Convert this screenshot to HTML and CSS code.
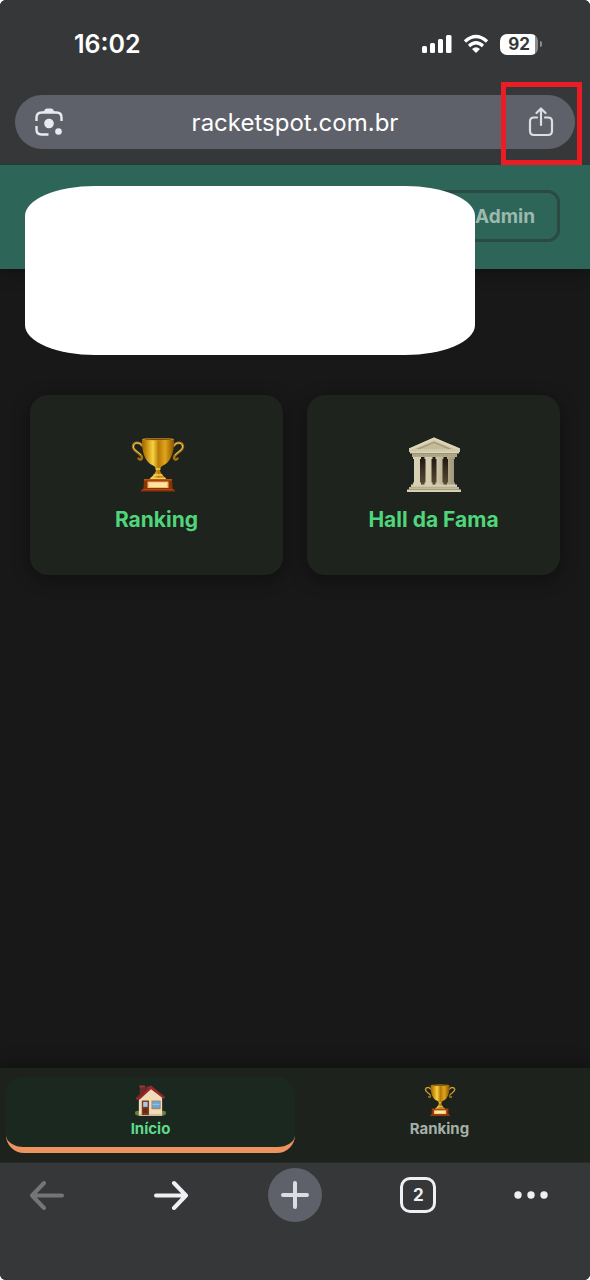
FILE: index.html
```html
<!DOCTYPE html>
<html lang="pt-BR">
<head>
    <meta charset="UTF-8">
    <meta name="viewport" content="width=device-width, initial-scale=1.0">
    <title>RacketSpot</title>
    <link rel="stylesheet" href="styles.css">
</head>
<body>
    <!-- shared icons -->
    <svg class="sprite" aria-hidden="true">
        <defs>
            <linearGradient id="gold" x1="0" x2="1" y1="0" y2="0">
                <stop offset="0" stop-color="#9a6504"/>
                <stop offset=".16" stop-color="#cf930f"/>
                <stop offset=".34" stop-color="#f5d244"/>
                <stop offset=".52" stop-color="#b87a06"/>
                <stop offset=".72" stop-color="#e0a51b"/>
                <stop offset="1" stop-color="#8a5200"/>
            </linearGradient>
            <linearGradient id="stone" x1="0" x2="1" y1="0" y2="0">
                <stop offset="0" stop-color="#d9d1b4"/>
                <stop offset=".5" stop-color="#d5ccae"/>
                <stop offset="1" stop-color="#a0977a"/>
            </linearGradient>
            <linearGradient id="shade" x1="0" x2="0" y1="0" y2="1">
                <stop offset="0" stop-color="#1d170f"/>
                <stop offset="1" stop-color="#5a4a35"/>
            </linearGradient>
        </defs>
        <symbol id="trophy" viewBox="0 0 56 56">
            <g fill="none" stroke-linecap="round">
                <path d="M13.500 9C11 5 5 4.500 4 9C3.500 14 10 15 12.500 19C14 22 11 24 9.500 21.500" stroke="#a87410" stroke-width="2.400"/>
                <path d="M44.500 9C47 5 53 4.500 54 9C54.500 14 48 15 45.500 19C44 22 47 24 48.500 21.500" stroke="#a87410" stroke-width="2.400"/>
                <path d="M13 8.500C10.500 5 5.500 5 4.500 9C4 13 9 14.500 11.500 17.500" stroke="#ead17a" stroke-width="1"/>
                <path d="M45 8.500C47.500 5 52.500 5 53.500 9C54 13 49 14.500 46.500 17.500" stroke="#ead17a" stroke-width="1"/>
            </g>
            <path d="M13 2C12.500 15 16 25 24 28.500C26 29.500 27 31 27 33C26.500 37 23.500 39 20 42.500H38C34.500 39 31.500 37 31 33C31 31 32 29.500 34 28.500C42 25 45.500 15 45 2Z" fill="url(#gold)"/>
            <ellipse cx="29" cy="2.200" rx="16" ry="1.300" fill="#c9921e"/>
            <ellipse cx="29" cy="2.300" rx="13.500" ry=".7" fill="#765008"/>
            <path d="M26.500 32H31.500M24.500 38H33.500M21.500 41.500H36.500" stroke="#f4cf5c" stroke-width="1.300"/>
            <path d="M15 42H43L43.500 51.500L46 53V54.500H12V53L14.500 51.500Z" fill="#8b3206"/>
            <path d="M15 42H43V43.500H15Z" fill="#b9560f"/>
            <path d="M14 52.500H44" stroke="#b04a0c"/>
            <rect x="18.500" y="44.500" width="21" height="6.500" fill="#f2b968"/>
            <rect x="20" y="45.500" width="18" height="4.500" fill="#ffe2a6"/>
        </symbol>
        <symbol id="temple" viewBox="0 0 56 56">
            <path d="M8 17H48V48H8Z" fill="#3c3322"/>
            <path d="M13 20H20V47H13ZM25 20H32V47H25ZM36 20H43V47H36Z" fill="url(#shade)"/>
            <path d="M28 .5L54 11.500V15H3V11.500Z" fill="#cfc7a8"/>
            <path d="M28 .5L54 11.500L53 13.500L28 3L4 13.500L3 11.500Z" fill="#ddd5b8"/>
            <path d="M28 4.500L46 12H10Z" fill="#a39a7a"/>
            <path d="M28 6L42 12H14Z" fill="#c4bb9a"/>
            <path d="M4 14.500H53V16.500H4Z" fill="#dcd4b6"/>
            <path d="M6 16.500H51V20H6Z" fill="#b5ab8a"/>
            <path d="M7 18H50" stroke="#968d6f" stroke-width=".8" stroke-dasharray="1 1"/>
            <g fill="url(#stone)">
                <path d="M8 20H14V47H8ZM19.500 20H25.500V47H19.500ZM30.500 20H36.500V47H30.500ZM42 20H48V47H42Z"/>
                <path d="M7 20H15V22H7ZM18.500 20H26.500V22H18.500ZM29.500 20H37.500V22H29.500ZM41 20H49V22H41Z"/>
                <path d="M7 45.500H15V48H7ZM18.500 45.500H26.500V48H18.500ZM29.500 45.500H37.500V48H29.500ZM41 45.500H49V48H41Z"/>
            </g>
            <path d="M5 47.500H51V50H5Z" fill="#d6ceb0"/>
            <path d="M3 50H53V52.500H3Z" fill="#c4bb9b"/>
            <path d="M1 52.500H55V55H1Z" fill="#d8d0b2"/>
            <path d="M4 50.200H52M2 52.600H54" stroke="#a2997a" stroke-width=".5"/>
        </symbol>
        <symbol id="house" viewBox="0 0 34 34">
            <path d="M6 2H11V11H6Z" fill="#6b2c2c"/>
            <path d="M5.500 1.500H11.500V3.500H5.500Z" fill="#8d3c3a"/>
            <ellipse cx="4" cy="30" rx="3" ry="2.500" fill="#68803e"/>
            <ellipse cx="30" cy="30" rx="3" ry="2.500" fill="#68803e"/>
            <path d="M5 14L17 4L29 14V33H5Z" fill="#f1dcb9"/>
            <path d="M5 31H29V33H5Z" fill="#d5bd96"/>
            <path d="M17.500 1.500L32 13.500L31 15.500L17.500 5.500L6 16H2V14.500L13 3Z" fill="#96292c"/>
            <path d="M14 4L4 14" stroke="#6f2023" stroke-width="1.300"/>
            <rect x="8" y="17" width="7.500" height="15" fill="#7d3d24"/>
            <rect x="9.500" y="18.500" width="4.500" height="5" fill="#a6cce5"/>
            <rect x="9.500" y="25" width="4.500" height="5" fill="#642b19"/>
            <rect x="18" y="17" width="9.500" height="9" fill="#a98468"/>
            <rect x="19" y="18" width="7.500" height="6.500" fill="#69a8d9"/>
            <path d="M19 21H26.500" stroke="#93c6ea"/>
        </symbol>
    </svg>

    <div class="screen">
        <div class="browser-top">
            <div class="status-bar">
                <time class="clock">16:02</time>
                <div class="status-icons">
                    <svg width="30" height="20" viewBox="0 0 30 20" fill="#fff" aria-hidden="true">
                        <rect x="0" y="12" width="5" height="7" rx="1.500"/>
                        <rect x="8" y="9" width="5" height="10" rx="1.500"/>
                        <rect x="16" y="5" width="5" height="14" rx="1.500"/>
                        <rect x="24" y="1" width="5.500" height="18" rx="1.500"/>
                    </svg>
                    <svg width="26" height="20" viewBox="0 0 26 20" aria-hidden="true">
                        <path d="M2 7.500Q13-2.500 24 7.500" fill="none" stroke="#fff" stroke-width="3.400"/>
                        <path d="M6 12Q13 5.500 20 12" fill="none" stroke="#fff" stroke-width="3.200"/>
                        <path d="M9 15Q13 11.500 17 15L13 19Z" fill="#fff"/>
                    </svg>
                    <div class="battery"><span class="battery-level">92</span></div>
                </div>
            </div>
            <div class="address-bar">
                <button class="bar-button" aria-label="Lens">
                    <svg width="30" height="30" viewBox="0 0 30 30" aria-hidden="true">
                        <path d="M2.500 14V10.500Q2.500 5.500 7.500 5.500H22.500Q27.500 5.500 27.500 10.500V14M2.500 19V22.500Q2.500 27.500 7.500 27.500H14.500" fill="none" stroke="#e8eaf2" stroke-width="2.400"/>
                        <path d="M9 5.500L11 2.500Q12 1.500 13 1.500H17Q18 1.500 19 2.500L21 5.500Z" fill="#e8eaf2"/>
                        <circle cx="15" cy="16.500" r="4.800" fill="#e8eaf2"/>
                        <circle cx="24.500" cy="24.500" r="3.300" fill="#e8eaf2"/>
                    </svg>
                </button>
                <input class="url" type="text" value="racketspot.com.br" aria-label="URL">
                <button class="bar-button" aria-label="Compartilhar">
                    <svg width="26" height="30" viewBox="0 0 26 30" fill="none" stroke="#dddee3" stroke-width="2.200" stroke-linecap="round" stroke-linejoin="round" aria-hidden="true">
                        <path d="M9 10.500H6Q2 10.500 2 14.500V24Q2 28 6 28H20Q24 28 24 24V14.500Q24 10.500 20 10.500H17"/>
                        <path d="M13 18V2M8.500 6L13 1.500L17.500 6"/>
                    </svg>
                    <span class="highlight"></span>
                </button>
            </div>
        </div>

        <header class="site-header">
            <button class="admin-button">Admin</button>
            <div class="cover"></div>
        </header>

        <main class="cards">
            <a class="card" href="#ranking">
                <svg class="card-icon" aria-hidden="true"><use href="#trophy"/></svg>
                <span>Ranking</span>
            </a>
            <a class="card" href="#hall">
                <svg class="card-icon" aria-hidden="true"><use href="#temple"/></svg>
                <span>Hall da Fama</span>
            </a>
        </main>

        <nav class="tabs">
            <a class="tab active" href="#inicio">
                <svg class="tab-icon" aria-hidden="true"><use href="#house"/></svg>
                <span>Início</span>
            </a>
            <a class="tab" href="#ranking">
                <svg class="tab-icon" aria-hidden="true"><use href="#trophy"/></svg>
                <span>Ranking</span>
            </a>
        </nav>

        <div class="toolbar">
            <button class="tool back" aria-label="Voltar">
                <svg width="36" height="30" viewBox="0 0 36 30" aria-hidden="true"><path d="M33 15.500H3M15 3L3 15.500L15 28"/></svg>
            </button>
            <button class="tool" aria-label="Avançar">
                <svg width="36" height="30" viewBox="0 0 36 30" aria-hidden="true"><path d="M3 15.500H33M21 3L33 15.500L21 28"/></svg>
            </button>
            <button class="tool new-tab" aria-label="Nova guia">
                <svg width="30" height="30" viewBox="0 0 30 30" aria-hidden="true"><path d="M15 3V27M3 15H27"/></svg>
            </button>
            <button class="tool" aria-label="Guias abertas"><span class="tab-count">2</span></button>
            <button class="tool more" aria-label="Mais">
                <svg width="34" height="8" viewBox="0 0 34 8" aria-hidden="true"><circle cx="4" cy="4" r="3.700"/><circle cx="17" cy="4" r="3.700"/><circle cx="30" cy="4" r="3.700"/></svg>
            </button>
        </div>
    </div>
</body>
</html>
```

FILE: styles.css
```css
* { box-sizing: border-box; }
body { margin: 0; background-color: #fff; font-family: Inter, "Liberation Sans", sans-serif; }
button { padding: 0; border: none; background: none; font-family: inherit; cursor: pointer; }
a { text-decoration: none; }
svg { display: block; }
.sprite { position: absolute; width: 0; height: 0; }

.screen { display: flex; flex-direction: column; min-height: 100vh; border-radius: 6px; overflow: hidden; background-color: #181818; }

/* browser top */
.browser-top { padding: 0 15px 14px; background-color: #363739; border-bottom: 2px solid #263c37; position: relative; z-index: 2; }
.status-bar { display: flex; justify-content: space-between; align-items: center; height: 95px; padding: 0 37px 7px 59px; }
.clock { color: #fff; font-size: 25px; font-weight: 600; }
.status-icons { display: flex; align-items: center; gap: 11px; }
.battery { position: relative; width: 38px; height: 21px; border-radius: 7px; background: linear-gradient(to right, #fff 92%, #8c8d8e 92%); text-align: center; }
.battery::after { content: ""; position: absolute; right: -4px; top: 7px; width: 2px; height: 6px; border-radius: 0 2px 2px 0; background-color: #8c8d8e; }
.battery-level { color: #363739; font-size: 17px; font-weight: 700; line-height: 21px; }
.address-bar { display: flex; height: 54px; border-radius: 27px; background-color: #5f616a; }
.bar-button { position: relative; display: flex; align-items: center; justify-content: center; width: 68px; }
.url { flex: 1; min-width: 0; padding: 0; border: none; outline: none; background: none; color: #fff; font-family: inherit; font-size: 24px; text-align: center; }
.highlight { position: absolute; top: -13px; right: -7px; bottom: -16px; left: -6px; border: 5px solid #ec1c24; }

/* page */
.site-header { position: relative; display: flex; justify-content: flex-end; padding: 25px 30px 27px; background-color: #2d6658; box-shadow: 0 4px 16px rgba(0, 0, 0, 0.3); }
.admin-button { height: 52px; padding: 0 22px 0 60px; border: 3px solid #2b4a41; border-radius: 12px; color: #9cb9ad; font-size: 19px; font-weight: 700; }
.cover { position: absolute; top: 21px; left: 25px; right: 115px; height: 169px; border-radius: 70px / 30px; background-color: #fff; }
.cards { flex: 1; display: grid; grid-template-columns: 1fr 1fr; align-items: start; gap: 24px; padding: 126px 30px 40px; }
.card { display: flex; flex-direction: column; align-items: center; gap: 14px; padding: 42px 10px; border-radius: 18px; background-color: #1e231d; box-shadow: 0 4px 18px rgba(0, 0, 0, 0.4); color: #4fd67b; font-size: 21px; font-weight: 700; line-height: 26px; }
.card-icon { width: 56px; height: 56px; }

/* bottom tabs */
.tabs { display: flex; padding: 9px 6px; background-color: #1e221c; box-shadow: 0 -4px 16px rgba(0, 0, 0, 0.3); }
.tab { flex: 1; display: flex; flex-direction: column; align-items: center; gap: 2px; padding: 7px 0 8px; border-bottom: 6px solid transparent; border-radius: 18px; color: #a3b1a7; font-size: 15px; font-weight: 700; line-height: 20px; }
.tab.active { background-color: #1b2820; border-bottom-color: #ec935f; color: #5ddb89; }
.tab-icon { width: 33px; height: 33px; }

/* browser toolbar */
.toolbar { display: flex; justify-content: space-between; padding: 5px 43px 58px 20px; border-top: 1px solid #292b2b; background-color: #363739; }
.tool { display: flex; align-items: center; justify-content: center; width: 54px; height: 54px; }
.tool path { fill: none; stroke: #f0f0f4; stroke-width: 4; stroke-linecap: round; stroke-linejoin: round; }
.tool.back path { stroke: #747576; }
.new-tab { border-radius: 50%; background-color: #5f616a; }
.new-tab path { stroke: #dcdde4; }
.tab-count { width: 36px; height: 36px; border: 3px solid #f0f0f4; border-radius: 10px; color: #f0f0f4; font-size: 17px; font-weight: 700; line-height: 30px; }
.more { width: 32px; }
.more svg { flex: none; fill: #f0f0f4; }
```
